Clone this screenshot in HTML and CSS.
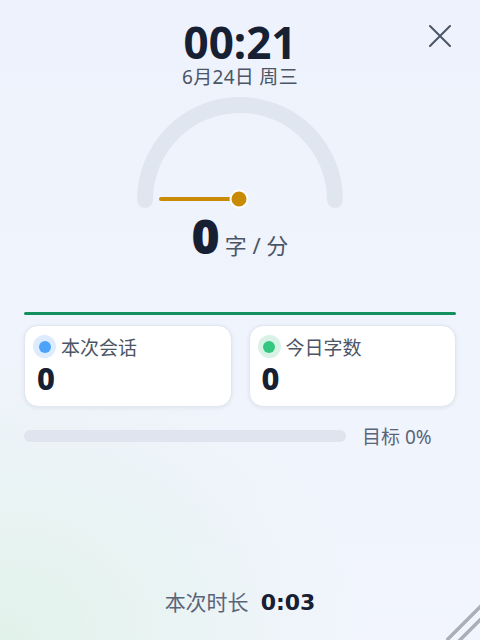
FILE: index.html
```html
<!DOCTYPE html>
<html lang="zh">
<head>
<meta charset="utf-8">
<link rel="stylesheet" href="styles.css">
</head>
<body>
<div class="app">
  <button class="close" aria-label="关闭">
    <svg width="22" height="22" viewBox="0 0 22 22"><path d="M1 1 L21 21 M21 1 L1 21" stroke="#4b5565" stroke-width="2" fill="none" stroke-linecap="round"/></svg>
  </button>
  <div class="clock">00:21</div>
  <div class="date">6月24日 周三</div>
  <svg class="gauge" width="220" height="112" viewBox="0 0 220 112">
    <path d="M15 103 A95 95 0 0 1 205 103" stroke="#e0e6ef" stroke-width="16" fill="none" stroke-linecap="round"/>
    <line x1="31" y1="102" x2="109" y2="102" stroke="#c98a06" stroke-width="4" stroke-linecap="round"/>
    <circle cx="109" cy="102" r="8.5" fill="#c98a06" stroke="#ffffff" stroke-width="2"/>
  </svg>
  <div class="rate"><span class="rate-num">0</span><span class="rate-unit">字 / 分</span></div>
  <div class="divider"></div>
  <div class="cards">
    <div class="card">
      <div class="card-head"><span class="dot dot-blue"></span><span class="card-label">本次会话</span></div>
      <div class="card-value">0</div>
    </div>
    <div class="card">
      <div class="card-head"><span class="dot dot-green"></span><span class="card-label">今日字数</span></div>
      <div class="card-value">0</div>
    </div>
  </div>
  <div class="goal">
    <div class="goal-bar"><div class="goal-fill" style="width:0%"></div></div>
    <span class="goal-label">目标 0%</span>
  </div>
  <div class="footer"><span class="footer-label">本次时长</span><span class="footer-value">0:03</span></div>
  <svg class="grip" width="34" height="36" viewBox="0 0 34 36"><path d="M0 37 L36 1 M13 37 L36 14" stroke="#a9aeb9" stroke-width="3.5" fill="none"/></svg>
</div>
</body>
</html>
```
FILE: styles.css
```css
* { box-sizing: border-box; }
html, body { margin: 0; padding: 0; }
body {
  width: 480px;
  height: 640px;
  overflow: hidden;
  font-family: "Noto Sans", "Noto Sans CJK SC", sans-serif;
  color: #1a2233;
}
.app {
  position: relative;
  width: 480px;
  height: 640px;
  padding: 20px 24px 0;
  display: flex;
  flex-direction: column;
  align-items: center;
  background:
    radial-gradient(ellipse 75% 45% at 0% 100%, #e1f2ea 0%, rgba(225,242,234,0) 100%),
    linear-gradient(180deg, #edf2fc 0%, #f2f5fd 100%);
}
.close {
  position: absolute;
  top: 25px;
  right: 29px;
  width: 22px;
  height: 22px;
  padding: 0;
  border: 0;
  background: none;
  display: flex;
}
.clock {
  font-size: 44px;
  line-height: 44px;
  font-weight: 700;
  color: #172033;
}
.date {
  font-size: 19px;
  line-height: 27px;
  letter-spacing: 0.3px;
  color: #4b5565;
}
.gauge {
  margin-top: 6px;
  display: block;
}
.rate {
  display: flex;
  align-items: baseline;
  gap: 5px;
  margin-top: 3px;
  height: 50px;
}
.rate-num {
  font-size: 48px;
  line-height: 48px;
  font-weight: 900;
  color: #172033;
}
.rate-unit {
  font-size: 22px;
  color: #4b5565;
}
.divider {
  align-self: stretch;
  height: 3px;
  margin-top: 50px;
  background: #12915f;
  border-radius: 2px;
}
.cards {
  align-self: stretch;
  margin-top: 10px;
  display: grid;
  grid-template-columns: 1fr 1fr;
  gap: 17px;
}
.card {
  height: 82px;
  background: #ffffff;
  border: 1px solid #e1e6ef;
  border-radius: 14px;
  box-shadow: 0 1px 4px rgba(30, 40, 70, 0.08);
  padding: 9px 8px 0;
}
.card-head {
  display: flex;
  align-items: center;
  gap: 5px;
  height: 23px;
}
.dot {
  width: 23px;
  height: 23px;
  border-radius: 50%;
  display: flex;
  align-items: center;
  justify-content: center;
}
.dot::after {
  content: "";
  width: 12px;
  height: 12px;
  border-radius: 50%;
}
.dot-blue { background: #dcebfd; }
.dot-blue::after { background: #4ba3fa; }
.dot-green { background: #d8f3e5; }
.dot-green::after { background: #34c77f; }
.card-label {
  font-size: 19px;
  color: #4b5565;
}
.card-value {
  padding-left: 4px;
  margin-top: 2px;
  font-size: 31px;
  line-height: 36px;
  font-weight: 800;
  color: #172033;
}
.goal {
  align-self: stretch;
  margin-top: 12px;
  display: flex;
  align-items: center;
  gap: 16px;
  height: 34px;
}
.goal-bar {
  width: 322px;
  height: 12px;
  border-radius: 6px;
  background: #dfe4ee;
  overflow: hidden;
}
.goal-fill { height: 100%; background: #12915f; }
.goal-label {
  font-size: 19px;
  color: #5a6478;
}
.footer {
  margin-top: auto;
  margin-bottom: 24px;
  display: flex;
  align-items: baseline;
  gap: 12px;
}
.footer-label {
  font-size: 21px;
  color: #5a6478;
}
.footer-value {
  font-family: "DejaVu Sans", "Noto Sans", sans-serif;
  font-size: 22px;
  font-weight: 700;
  color: #172033;
}
.grip {
  position: absolute;
  right: 0;
  bottom: 0;
}
```
